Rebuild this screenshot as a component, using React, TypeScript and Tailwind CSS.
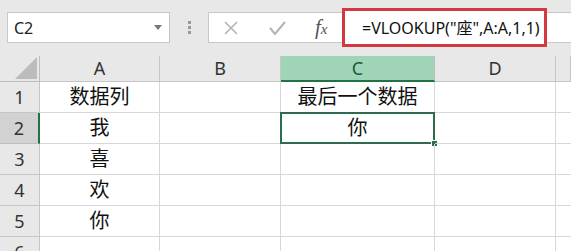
import React from 'react';

const cols = ['A', 'B', 'C', 'D', ''];
const rows: string[][] = [
  ['数据列', '', '最后一个数据', ''],
  ['我', '', '你', ''],
  ['喜', '', '', ''],
  ['欢', '', '', ''],
  ['你', '', '', ''],
  ['', '', '', ''],
];

const font = { fontFamily: '"Noto Sans", "Noto Sans CJK SC", sans-serif' };

const App: React.FC = () => {
  return (
    <div className="relative w-[571px] h-[251px] overflow-hidden bg-white" style={font}>
      {/* formula bar */}
      <div className="h-[56px] bg-[#e8e8e8] flex items-start pt-[12px] pl-[7px]">
        <div className="w-[163px] h-[31px] bg-white border border-[#c8c8c8] flex items-center justify-between pl-[6px] pr-[7px]">
          <span className="text-[16px] text-[#222] leading-none">C2</span>
          <svg width="8" height="5" viewBox="0 0 8 5"><path d="M0 0h8L4 5z" fill="#777" /></svg>
        </div>
        <div className="w-[38px] h-[31px] flex flex-col items-center justify-center gap-[2px]">
          <span className="w-[3px] h-[3px] bg-[#999]" />
          <span className="w-[3px] h-[3px] bg-[#999]" />
          <span className="w-[3px] h-[3px] bg-[#999]" />
        </div>
        <div className="flex-1 h-[31px] bg-white border border-[#c8c8c8] border-r-0 flex items-center">
          <div className="w-[133px] flex items-center">
            <svg className="ml-[14px]" width="16" height="16" viewBox="0 0 16 16">
              <path d="M2 2l12 12M14 2L2 14" stroke="#b4b4b4" strokeWidth="1.6" />
            </svg>
            <svg className="ml-[30px]" width="17" height="14" viewBox="0 0 17 14">
              <path d="M1 7l5 6L16 1" stroke="#b4b4b4" strokeWidth="2" fill="none" />
            </svg>
            <span className="ml-[29px] text-[21px] italic text-[#555] leading-none" style={{ fontFamily: '"Liberation Serif", serif' }}>
              f<span className="text-[15px]">x</span>
            </span>
          </div>
        </div>
      </div>
      {/* red highlight over formula text */}
      <div className="absolute left-[342px] top-[8px] w-[205px] h-[39px] border-[3px] border-[#d23a3f] bg-white flex items-center pl-[17px]">
        <span className="text-[16px] text-[#111] leading-none whitespace-nowrap">=VLOOKUP("座",A:A,1,1)</span>
      </div>

      {/* sheet */}
      <div className="grid grid-cols-[40px_120px_121px_154px_121px_1fr]">
        <div className="h-[26px] bg-[#e8e8e8] border-r border-b border-[#bdbdbd] flex items-end justify-end pr-[2px] pb-[2px]">
          <svg width="22" height="22" viewBox="0 0 22 22"><path d="M22 0V22H0z" fill="#bcbcbc" /></svg>
        </div>
        {cols.map((c) =>
          c === 'C' ? (
            <div key={c} className="h-[26px] bg-[#9fd5b6] border-r border-[#bdbdbd] border-b-2 border-b-[#217346] flex items-center justify-center text-[18px] text-[#1f5a38]">
              {c}
            </div>
          ) : (
            <div key={c || 'E'} className="h-[26px] bg-[#e8e8e8] border-r border-b border-[#c6c6c6] flex items-center justify-center text-[18px] text-[#333]">
              {c}
            </div>
          )
        )}
        {rows.map((r, i) => (
          <React.Fragment key={i}>
            <div
              className={
                i === 1
                  ? 'h-[31px] bg-[#d2d2d2] border-r-2 border-r-[#217346] border-b border-[#bdbdbd] flex items-center justify-center text-[18px] text-[#333]'
                  : 'h-[31px] bg-[#e8e8e8] border-r border-b border-[#c6c6c6] flex items-center justify-center text-[18px] text-[#333]'
              }
            >
              {i + 1}
            </div>
            {r.map((v, j) => (
              <div key={j} className="relative h-[31px] border-r border-b border-[#d8d8d8] flex items-center justify-center text-[20px] text-[#111] whitespace-nowrap">
                {v}
                {i === 1 && j === 2 && (
                  <>
                    <div className="absolute -left-px -top-px -right-px -bottom-px border-2 border-[#2f6b4d]" />
                    <div className="absolute -right-[4px] -bottom-[4px] w-[7px] h-[7px] bg-[#2f6b4d] border border-white" />
                  </>
                )}
              </div>
            ))}
            <div className="h-[31px] border-b border-[#d8d8d8]" />
          </React.Fragment>
        ))}
      </div>
    </div>
  );
};

export default App;
